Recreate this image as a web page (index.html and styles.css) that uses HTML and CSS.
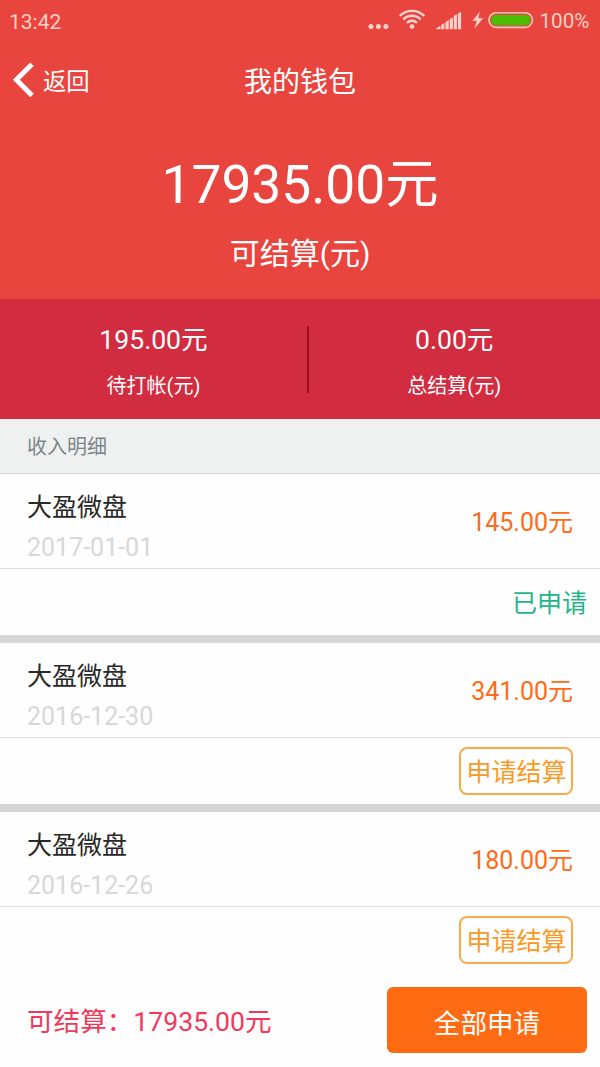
FILE: index.html
```
<!DOCTYPE html>
<html lang="zh-CN">
<head>
<meta charset="utf-8">
<title>我的钱包</title>
<link rel="stylesheet" href="styles.css">
</head>
<body>
<div class="app">
  <header class="hero">
    <div class="status">
      <span class="time">13:42</span>
      <svg class="status-icons" width="174" height="40" viewBox="0 0 174 40">
        <g fill="#ffd3cc">
          <circle cx="11" cy="26.5" r="2.5"/><circle cx="18.4" cy="26.5" r="2.5"/><circle cx="25.9" cy="26.5" r="2.5"/>
          <circle cx="52" cy="26.6" r="2.4"/>
        </g>
        <g fill="none" stroke="#ffd3cc" stroke-width="2.4">
          <path d="M46.9 22.9a7.2 7.2 0 0 1 10.2 0"/>
          <path d="M43.3 19.4a12.3 12.3 0 0 1 17.4 0"/>
          <path d="M39.8 15.9a17.3 17.3 0 0 1 24.4 0"/>
        </g>
        <path fill="#ffd3cc" d="M76.5 29.2v-1.3l3.9-1.9v3.2zM81.2 29.2v-4.2l3.2-1.9v6.1zM85.5 29.2v-7l3.2-2.1v9.1zM89.7 29.2v-9.9l3.2-2.1v12zM93.8 29.2V16.1l3.1-2v15.1zM97.9 29.2V13.3l3.2-1.2v17.1z"/>
        <path fill="#ffd3cc" d="M119.8 12l-7.4 8.7h4.4l-2.3 7.8 8.7-10.2h-4.8z"/>
        <rect x="129" y="12.8" width="43.4" height="14.6" rx="7.3" fill="none" stroke="#ffc9b8" stroke-width="1.6"/>
        <rect x="131.2" y="15" width="39" height="10.2" rx="4.5" fill="#4bbd05"/>
      </svg>
      <span class="battery">100%</span>
    </div>
    <nav class="nav">
      <a class="back">
        <svg width="22" height="36" viewBox="0 0 22 36"><path d="M20 2.2L4.4 17.8 20 33.4" fill="none" stroke="#fff" stroke-width="5"/></svg>
        <span class="back-text">返回</span>
      </a>
      <h1 class="title">我的钱包</h1>
    </nav>
    <div class="balance">17935.00元</div>
    <div class="balance-label">可结算(元)</div>
  </header>
  <section class="stats">
    <div class="stat"><div class="stat-value">195.00元</div><div class="stat-label">待打帐(元)</div></div>
    <div class="divider"></div>
    <div class="stat"><div class="stat-value">0.00元</div><div class="stat-label">总结算(元)</div></div>
  </section>
  <h2 class="section-title">收入明细</h2>
  <main class="list">
    <article class="item">
      <div class="info">
        <div><div class="name">大盈微盘</div><div class="date">2017-01-01</div></div>
        <div class="amount">145.00元</div>
      </div>
      <div class="action"><span class="done">已申请</span></div>
    </article>
    <article class="item">
      <div class="info">
        <div><div class="name">大盈微盘</div><div class="date">2016-12-30</div></div>
        <div class="amount">341.00元</div>
      </div>
      <div class="action"><button class="apply">申请结算</button></div>
    </article>
    <article class="item">
      <div class="info">
        <div><div class="name">大盈微盘</div><div class="date">2016-12-26</div></div>
        <div class="amount">180.00元</div>
      </div>
      <div class="action"><button class="apply">申请结算</button></div>
    </article>
  </main>
  <footer class="footer">
    <span class="total">可结算：17935.00元</span>
    <button class="apply-all">全部申请</button>
  </footer>
</div>
</body>
</html>
```
FILE: styles.css
```
* { box-sizing: border-box; margin: 0; padding: 0; }
body { font-family: Roboto, "Noto Sans CJK SC", sans-serif; background: #fff; }
h1, h2, button { font: inherit; }
.app { width: 600px; height: 1067px; overflow: hidden; display: flex; flex-direction: column; background: #fefefe; }
.hero { height: 299px; flex: none; background: #e8453f; color: #fff; text-align: center; }
.status { height: 40px; display: flex; align-items: center; padding: 0 10px 0 9px; color: #ffd0c4; font-size: 21px; line-height: 40px; }
.time { margin-right: auto; padding-top: 3px; }
.status-icons { flex: none; margin-right: 5px; }
.battery { width: 51px; font-size: 20.7px; padding-top: 1px; }
.nav { height: 80px; display: grid; grid-template-columns: 1fr auto 1fr; align-items: center; }
.back { display: flex; align-items: center; gap: 9px; padding-left: 12px; font-size: 23.3px; line-height: 36px; }
.back-text { padding-top: 3px; }
.title { font-size: 28px; line-height: 40px; padding-top: 5px; }
.balance { font-size: 53.3px; line-height: 64px; margin-top: 33px; }
.balance-label { font-size: 30px; line-height: 40px; margin-top: 17px; }
.stats { height: 120px; flex: none; display: grid; grid-template-columns: 307px 1.5px 291.5px; align-items: center; background: #d22c40; color: #fff; text-align: center; }
.stat { padding-top: 4px; }
.divider { height: 67px; background: #a0101c; }
.stat-value { font-size: 26.6px; line-height: 36px; }
.stat-label { font-size: 20px; line-height: 30px; margin-top: 13px; }
.section-title { height: 55px; flex: none; padding: 1px 0 0 27px; background: #eff1f1; border-bottom: 1px solid #d5d5d5; color: #7c868a; font-size: 20px; line-height: 54px; }
.list { height: 500px; flex: none; font-size: 25px; }
.item { height: 169px; border-bottom: 8px solid #d6d6d6; }
.item:last-child { border-bottom: 0; }
.info { height: 95px; display: flex; justify-content: space-between; align-items: center; padding: 0 27px; border-bottom: 1px solid #dedede; }
.name { color: #282828; line-height: 40px; padding-top: 13px; }
.date { color: #d8d8d8; line-height: 40px; }
.amount { color: #ff6b18; line-height: 40px; padding-top: 3px; }
.action { height: 66px; display: flex; justify-content: flex-end; align-items: flex-start; padding: 9px 27px 0; }
.done { color: #1fb788; margin-right: -14px; line-height: 46px; padding-top: 3px; }
.apply { width: 114px; height: 48px; border: 2px solid rgba(247, 150, 30, .8); border-radius: 8px; background: transparent; color: #f89a25; line-height: 43px; padding: 2px 0 0 1px; white-space: nowrap; }
.footer { flex: 1; display: flex; align-items: center; justify-content: space-between; padding: 0 13px 1px 27px; font-size: 26.6px; }
.total { color: #f2395a; padding-bottom: 2px; }
.apply-all { width: 200px; height: 66px; border: 0; border-radius: 6px; background: #ff6b13; color: #fff; padding-top: 2px; }
```
